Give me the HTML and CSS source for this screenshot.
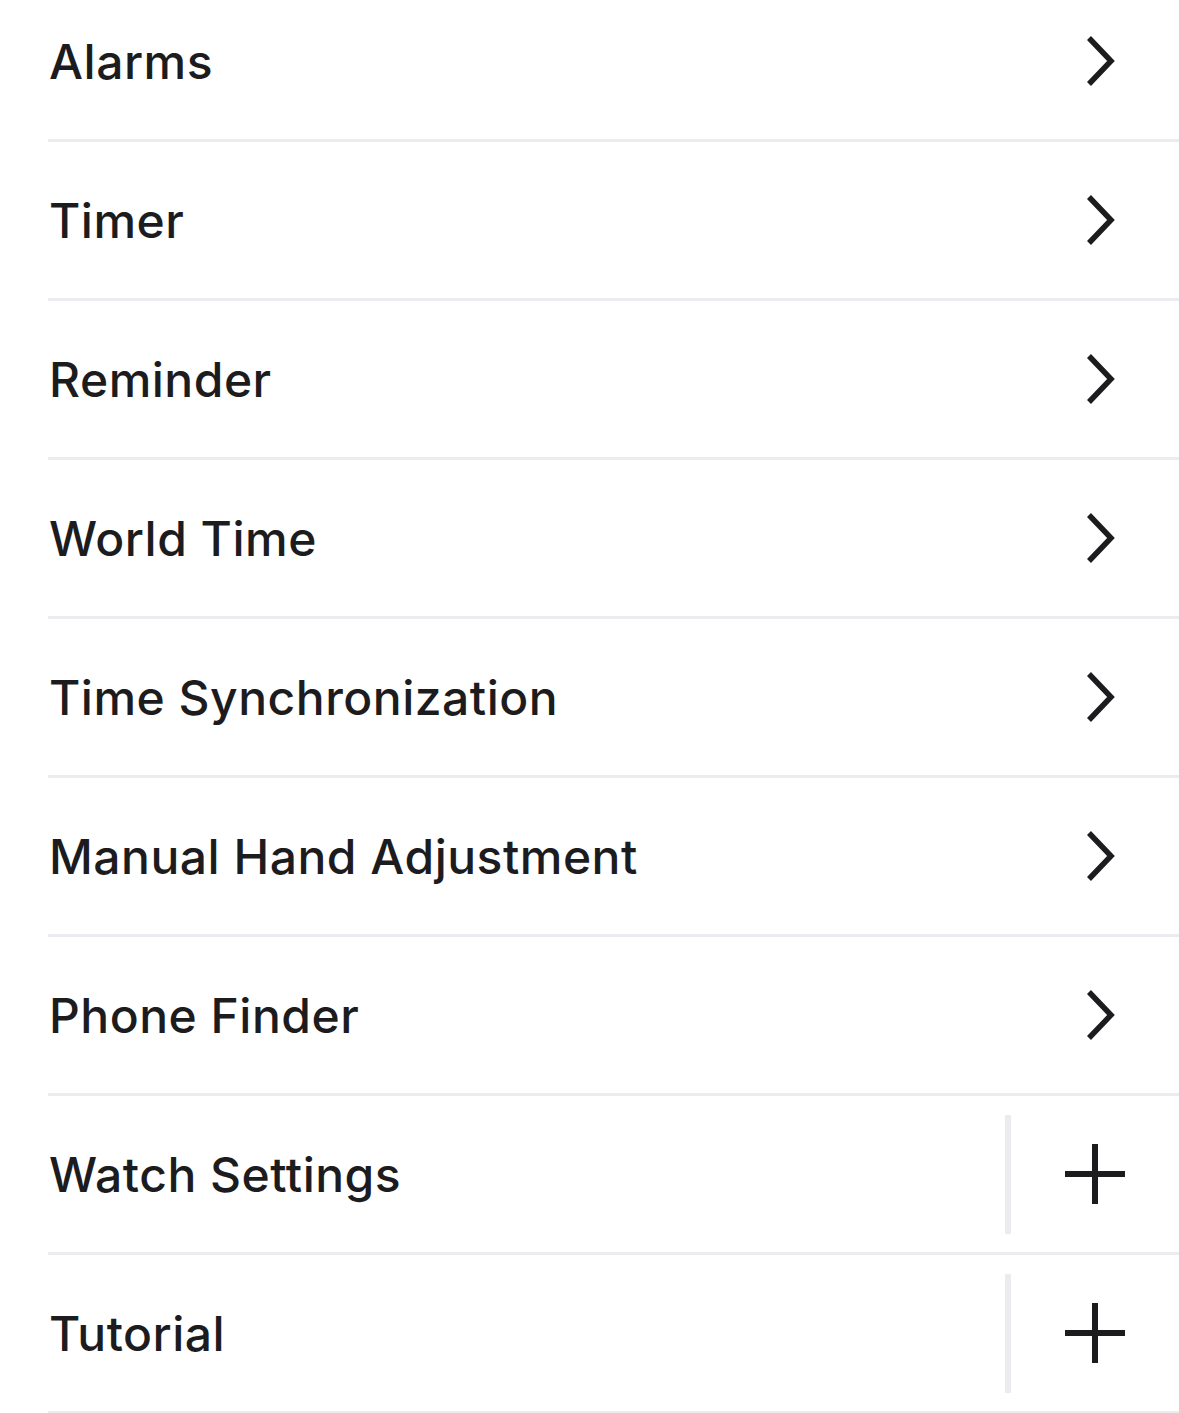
FILE: index.html
```html
<!DOCTYPE html>
<html lang="en">
<head>
<meta charset="utf-8">
<title>Watch menu</title>
<link rel="stylesheet" href="styles.css">
</head>
<body>
<ul class="menu">
  <li class="row"><span class="label">Alarms</span><span class="action"><svg class="chev" width="40" height="60" viewBox="0 0 40 60"><path d="M10 7 L32 30 L10 53" /></svg></span></li>
  <li class="row"><span class="label">Timer</span><span class="action"><svg class="chev" width="40" height="60" viewBox="0 0 40 60"><path d="M10 7 L32 30 L10 53" /></svg></span></li>
  <li class="row"><span class="label">Reminder</span><span class="action"><svg class="chev" width="40" height="60" viewBox="0 0 40 60"><path d="M10 7 L32 30 L10 53" /></svg></span></li>
  <li class="row"><span class="label">World Time</span><span class="action"><svg class="chev" width="40" height="60" viewBox="0 0 40 60"><path d="M10 7 L32 30 L10 53" /></svg></span></li>
  <li class="row"><span class="label">Time Synchronization</span><span class="action"><svg class="chev" width="40" height="60" viewBox="0 0 40 60"><path d="M10 7 L32 30 L10 53" /></svg></span></li>
  <li class="row"><span class="label">Manual Hand Adjustment</span><span class="action"><svg class="chev" width="40" height="60" viewBox="0 0 40 60"><path d="M10 7 L32 30 L10 53" /></svg></span></li>
  <li class="row"><span class="label">Phone Finder</span><span class="action"><svg class="chev" width="40" height="60" viewBox="0 0 40 60"><path d="M10 7 L32 30 L10 53" /></svg></span></li>
  <li class="row"><span class="label">Watch Settings</span><span class="expand"><svg class="plus" width="60" height="60" viewBox="0 0 60 60"><path d="M0 30 H60 M30 0 V60" /></svg></span></li>
  <li class="row"><span class="label">Tutorial</span><span class="expand"><svg class="plus" width="60" height="60" viewBox="0 0 60 60"><path d="M0 30 H60 M30 0 V60" /></svg></span></li>
</ul>
</body>
</html>
```

FILE: styles.css
```css
html, body {
  margin: 0;
  padding: 0;
  background: #ffffff;
}
body {
  font-family: Inter, "Noto Sans", "Liberation Sans", sans-serif;
  color: #1c1c1e;
  overflow: hidden;
}
.menu {
  list-style: none;
  margin: -17px 0 0 48px;
  padding: 0;
}
.row {
  display: flex;
  align-items: center;
  height: 156px;
  border-bottom: 3px solid #ececf0;
}
.label {
  flex: 1;
  font-size: 48px;
  font-weight: 500;
  letter-spacing: 0.5px;
  padding-left: 1px;
}
.action {
  display: flex;
  align-items: center;
  width: 100px;
}
.chev path {
  fill: none;
  stroke: #1c1c1e;
  stroke-width: 5.5;
  stroke-linecap: butt;
  stroke-linejoin: miter;
}
.expand {
  display: flex;
  align-items: center;
  justify-content: center;
  width: 168px;
  height: 119px;
  border-left: 6px solid #ececf0;
}
.plus path {
  fill: none;
  stroke: #1c1c1e;
  stroke-width: 6;
}
```
